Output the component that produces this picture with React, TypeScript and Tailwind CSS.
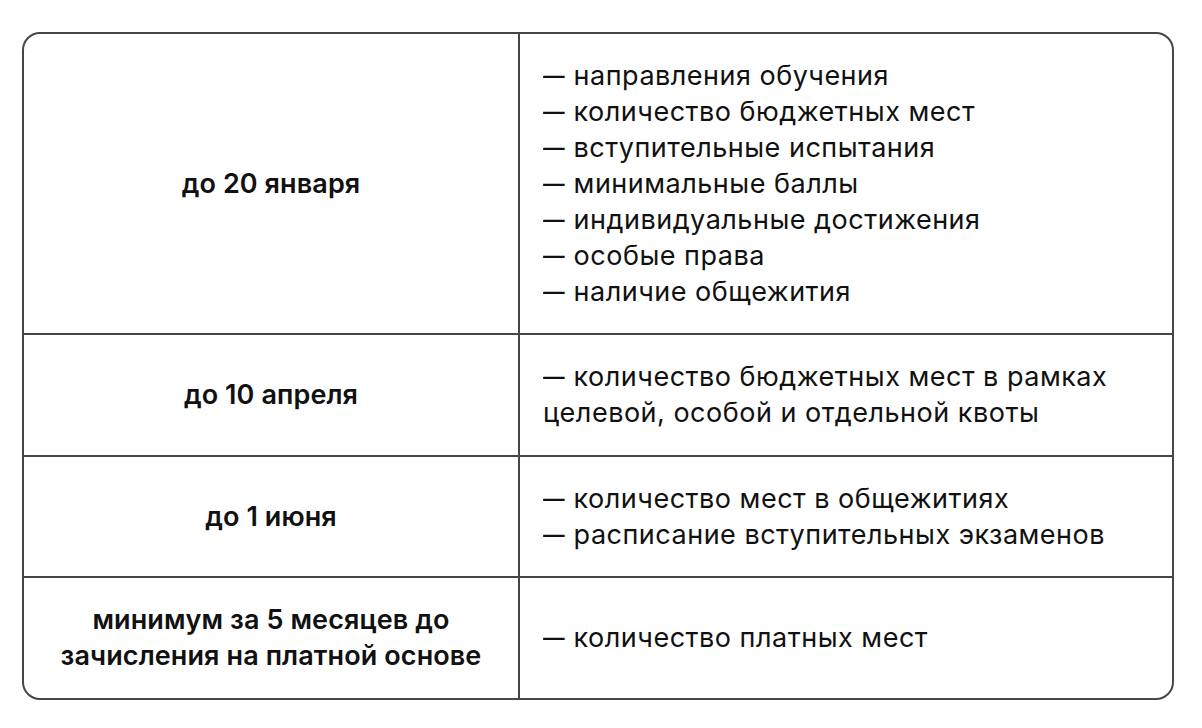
const rows = [
  {
    when: ["до 20 января"],
    what: [
      "— направления обучения",
      "— количество бюджетных мест",
      "— вступительные испытания",
      "— минимальные баллы",
      "— индивидуальные достижения",
      "— особые права",
      "— наличие общежития",
    ],
  },
  {
    when: ["до 10 апреля"],
    what: ["— количество бюджетных мест в рамках", "целевой, особой и отдельной квоты"],
  },
  {
    when: ["до 1 июня"],
    what: ["— количество мест в общежитиях", "— расписание вступительных экзаменов"],
  },
  {
    when: ["минимум за 5 месяцев до", "зачисления на платной основе"],
    what: ["— количество платных мест"],
  },
];

function Line({ text }: { text: string }) {
  // em dash in Inter is wider than in the original font, pull the word closer
  if (text.startsWith("— ")) {
    return (
      <div>
        <span className="inline-block scale-x-[0.8] origin-left mr-[-5px]">—</span> {text.slice(2)}
      </div>
    );
  }
  return <div>{text}</div>;
}

export default function App() {
  return (
    <div className="w-[1202px] h-[728px] bg-white pt-8 pl-[22px]" style={{ fontFamily: "Inter, 'Noto Sans', sans-serif" }}>
      <div className="w-[1152px] h-[668px] border-2 border-[#474747] rounded-[18px] overflow-hidden flex flex-col text-[#111]">
        {rows.map((r, i) => (
          <div
            key={i}
            className={`flex flex-1 ${i === 0 ? "flex-none h-[299px]" : ""} ${i > 0 ? "border-t-2 border-[#474747]" : ""}`}
          >
            <div className="w-[496px] flex flex-col items-center justify-center border-r-2 border-[#474747] text-[27px] leading-[36px] font-semibold text-center tracking-[0.1px]">
              {r.when.map((t) => (
                <div key={t}>{t}</div>
              ))}
            </div>
            <div className="flex-1 flex flex-col justify-center pl-[23px] text-[27px] leading-[36px] tracking-[0.5px]">
              {r.what.map((t) => (
                <Line key={t} text={t} />
              ))}
            </div>
          </div>
        ))}
      </div>
    </div>
  );
}
